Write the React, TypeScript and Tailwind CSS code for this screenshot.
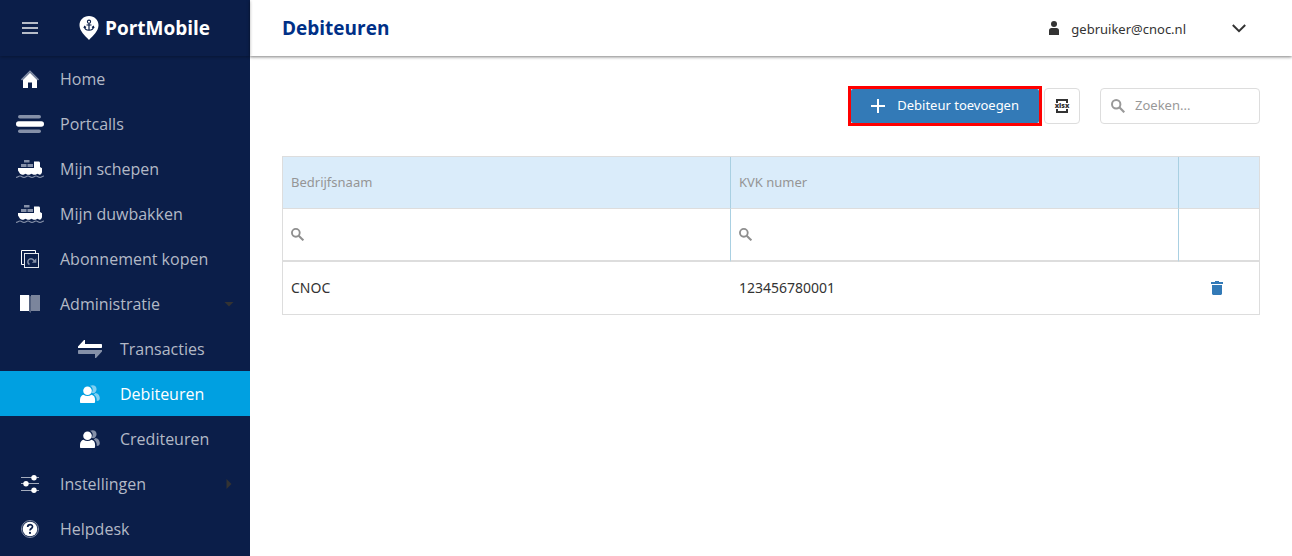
import { useState } from "react";
import type { ReactNode } from "react";
import clsx from "clsx";

interface MenuItem {
  label: string;
  icon: ReactNode;
  child?: boolean;
  arrow?: "down" | "right";
}

function HomeIcon() {
  return (
    <svg width="18" height="18" viewBox="0 0 18 18" aria-hidden="true">
      <path d="M.5 10 9 1.300 17.500 10" fill="none" stroke="#8590a8" strokeWidth="1.600" />
      <path d="M9 2.800 16 9.800V18h-5v-5.500H7V18H2V9.800z" fill="#fff" />
    </svg>
  );
}

function PortcallsIcon() {
  return (
    <svg width="28" height="18" viewBox="0 0 28 18" aria-hidden="true">
      <rect x="2" width="23" height="3.600" rx="1.800" fill="#8590a8" />
      <rect y="6.300" width="28" height="5.400" rx="2.700" fill="#fff" />
      <rect x="2" y="14.400" width="23" height="3.600" rx="1.800" fill="#8590a8" />
    </svg>
  );
}

function ShipIcon() {
  return (
    <svg width="28" height="18" viewBox="0 0 28 18" aria-hidden="true">
      <path d="M8 0h5.500v2.500H8zM5 4h5.500v3H5zM11.500 4H17v3h-5.500z" fill="#8590a8" />
      <path
        d="M2 8h16V1.500h4.500c1 0 1.500.7 1.500 1.500v4l2 1.300v4L25 14.300l-1.500.4-2-1-2 1h-2l-2-1-2 1h-2l-2-1-2 1H6l-2-1L2 10.500z"
        fill="#fff"
      />
      <path
        d="M0 17.300c2 0 2-1.300 4-1.300s2 1.300 4 1.300 2-1.300 4-1.300 2 1.300 4 1.300 2-1.300 4-1.300 2 1.300 4 1.300 2-1.300 4-1.300"
        fill="none"
        stroke="#8590a8"
        strokeWidth="1.200"
      />
    </svg>
  );
}

function SubscriptionIcon() {
  return (
    <svg width="18" height="18" viewBox="0 0 18 18" fill="none" aria-hidden="true">
      <path d="M3 14.500H.5V.5h14V3" stroke="#fff" />
      <rect x="3.500" y="3.500" width="14" height="14" stroke="#e3e6eb" />
      <path d="M8.500 14.500c-2-1-2.200-3.700-.5-5s4.500-.7 5.300 1.700" stroke="#8590a8" strokeWidth="1.500" />
      <path d="M15.300 8.300v4.400h-4.400z" fill="#8590a8" />
    </svg>
  );
}

function BookIcon() {
  return (
    <svg width="20" height="18" viewBox="0 0 20 18" aria-hidden="true">
      <path d="M0 0h9v16H0z" fill="#fff" />
      <path d="M9 0l2 1.500V18l-2-1.500z" fill="#55627f" />
      <path d="M11 0h9v16h-9z" fill="#7b859c" />
    </svg>
  );
}

function TransferIcon() {
  return (
    <svg width="24" height="18" viewBox="0 0 24 18" aria-hidden="true">
      <path d="M6 0h1v4h16c.6 0 1 .4 1 1v2c0 .6-.4 1-1 1H0V6.500z" fill="#fff" />
      <path d="M18 18h-1v-4H1c-.6 0-1-.4-1-1v-2c0-.6.400-1 1-1h23v1.500z" fill="#8590a8" />
    </svg>
  );
}

function UsersIcon({ active }: { active?: boolean }) {
  return (
    <svg width="20" height="18" viewBox="0 0 20 18" aria-hidden="true">
      <g className={active ? "fill-[#7fcff0]" : "fill-[#8590a8]"}>
        <path d="M10 .8C14-1 17 1.500 16.500 4.800c-.3 2-1.500 3-2.500 3.500L11.500 8C13.500 5 13 2.500 10 .8z" />
        <path d="M15.500 8C18 8.500 19.500 10 19.800 13c0 2-1 3-3 3 0-3.500-1-5-3-6.500z" />
      </g>
      <ellipse cx="7.500" cy="5.800" rx="4.300" ry="4.300" fill="#fff" />
      <path d="M3.500 9.800c2.500 1.700 5.500 1.700 8 0C14.500 10.500 15.500 13 15 17c0 .6-.4 1-1 1H1c-.6 0-1-.4-1-1-.3-4 .8-6.500 3.500-7.200z" fill="#fff" />
    </svg>
  );
}

function SlidersIcon() {
  return (
    <svg width="18" height="18" viewBox="0 0 18 18" aria-hidden="true">
      <path d="M0 2.500h18M0 8.500h18M0 15.500h18" stroke="#a5adbe" />
      <circle cx="13" cy="2.700" r="2.700" fill="#fff" />
      <circle cx="5" cy="8.800" r="2.700" fill="#fff" />
      <circle cx="13" cy="15.300" r="2.700" fill="#fff" />
    </svg>
  );
}

function HelpIcon() {
  return (
    <svg width="18" height="18" viewBox="0 0 18 18" fill="none" aria-hidden="true">
      <circle cx="9" cy="9" r="8.500" stroke="#8590a8" />
      <circle cx="9" cy="9" r="7.300" fill="#fff" />
      <path d="M6.700 7c0-3 4.800-3 4.800-.3C11.500 8.500 9 8.500 9 10.600" stroke="#0b1e49" strokeWidth="1.700" />
      <circle cx="9" cy="12.900" r="1.100" fill="#0b1e49" />
    </svg>
  );
}

function PinIcon() {
  return (
    <svg width="20" height="24" viewBox="0 0 20 24" fill="none" aria-hidden="true">
      <path d="M10 0c5.500 0 9.500 4 9.500 9.200C19.500 15 14 19.500 10 24 6 19.500.5 15 .5 9.200.5 4 4.500 0 10 0z" fill="#fff" />
      <circle cx="10" cy="5.700" r="1.600" stroke="#0b1e49" strokeWidth="1.100" />
      <path d="M10 7.300V14M7.500 9h5M5.500 10.500c.3 5 8.700 5 9 0M4.900 12l.7-1.600 1.400 1M15.100 12l-.7-1.600-1.400 1" stroke="#0b1e49" strokeWidth="1.200" />
    </svg>
  );
}

function SearchIcon({ size }: { size: number }) {
  return (
    <svg width={size} height={size} viewBox="0 0 14 14" fill="none" aria-hidden="true">
      <circle cx="5.200" cy="5.200" r="4.200" stroke="currentColor" strokeWidth="2" />
      <path d="m8.300 8.300 5 5" stroke="currentColor" strokeWidth="2.200" />
    </svg>
  );
}

function XlsxIcon() {
  return (
    <svg width="16" height="14" viewBox="0 0 16 14" aria-hidden="true">
      <path d="M3 4V1h10v3M3 10v3h10v-3" fill="none" stroke="#333" strokeWidth="2" />
      <text x="8" y="9.300" textAnchor="middle" fill="#333" className="font-['Open_Sans',sans-serif] text-[7px] font-extrabold">
        xlsx
      </text>
    </svg>
  );
}

const menu: MenuItem[] = [
  { label: "Home", icon: <HomeIcon /> },
  { label: "Portcalls", icon: <PortcallsIcon /> },
  { label: "Mijn schepen", icon: <ShipIcon /> },
  { label: "Mijn duwbakken", icon: <ShipIcon /> },
  { label: "Abonnement kopen", icon: <SubscriptionIcon /> },
  { label: "Administratie", icon: <BookIcon />, arrow: "down" },
  { label: "Transacties", icon: <TransferIcon />, child: true },
  { label: "Debiteuren", icon: <UsersIcon active />, child: true },
  { label: "Crediteuren", icon: <UsersIcon />, child: true },
  { label: "Instellingen", icon: <SlidersIcon />, arrow: "right" },
  { label: "Helpdesk", icon: <HelpIcon /> },
];

const debtors = [{ name: "CNOC", kvk: "123456780001" }];

function Sidebar() {
  return (
    <aside className="flex w-[250px] shrink-0 flex-col bg-[#0b1e49] font-['Open_Sans',sans-serif]">
      <div className="flex h-14 items-center shadow-[0_1px_3px_rgba(0,0,0,0.3)]">
        <button type="button" aria-label="Menu" className="flex w-[60px] justify-center">
          <svg width="16" height="12" viewBox="0 0 16 12" aria-hidden="true">
            <path d="M0 1h16M0 6h16M0 11h16" stroke="#b6bcc8" strokeWidth="2" />
          </svg>
        </button>
        <a href="#" className="ml-[19px] flex items-center gap-1.5 text-[19px] font-bold text-white">
          <PinIcon />
          PortMobile
        </a>
      </div>
      <nav>
        <ul>
          {menu.map((item) => {
            const active = item.label === "Debiteuren";
            return (
              <li key={item.label}>
                <a
                  href="#"
                  aria-current={active ? "page" : undefined}
                  className={clsx(
                    "flex h-[45px] items-center text-base",
                    item.child && "pl-[60px]",
                    active ? "bg-[#00a0e1] text-white" : "text-[#b3b9c6]",
                  )}
                >
                  <span className="flex w-[60px] justify-center">{item.icon}</span>
                  <span className="flex-1">{item.label}</span>
                  {item.arrow && (
                    <span className="mr-4 flex w-[10px] justify-center">
                      <svg width="10" height="10" viewBox="0 0 10 10" fill="#333" aria-hidden="true">
                        <path d={item.arrow === "down" ? "M.5 3h9L5 7.500z" : "M2.500 0v10L7.500 5z"} />
                      </svg>
                    </span>
                  )}
                </a>
              </li>
            );
          })}
        </ul>
      </nav>
    </aside>
  );
}

function FilterCell({ id, label }: { id: string; label: string }) {
  return (
    <td className="h-[53px] border-r border-b-2 border-r-[#a9d0e2] border-b-[#ddd] px-2">
      <div className="flex items-center gap-2 text-[#8f8f8f]">
        <label htmlFor={id} aria-label={label}>
          <SearchIcon size={13} />
        </label>
        <input id={id} type="text" className="min-w-0 flex-1 text-[#333] outline-none" />
      </div>
    </td>
  );
}

export default function App() {
  const [query, setQuery] = useState("");
  const rows = debtors.filter((d) => `${d.name} ${d.kvk}`.toLowerCase().includes(query.toLowerCase()));

  return (
    <div className="flex min-h-screen bg-white font-['Noto_Sans',sans-serif] text-[13px] text-[#333]">
      <Sidebar />
      <div className="min-w-0 flex-1">
        <header className="flex h-14 items-center justify-between pr-[46px] pl-8 shadow-[0_1px_3px_rgba(0,0,0,0.5)]">
          <h1 className="font-['Open_Sans',sans-serif] text-[19px] font-bold text-[#003087]">Debiteuren</h1>
          <button type="button" className="flex items-center">
            <svg width="10" height="14" viewBox="0 0 10 14" fill="#333" aria-hidden="true">
              <circle cx="5" cy="3" r="3" />
              <path d="M0 14v-4.500C0 8 1 7 2.500 7h5C9 7 10 8 10 9.500V14z" />
            </svg>
            <span className="ml-3 py-1 pt-2">gebruiker@cnoc.nl</span>
            <svg className="ml-[46px]" width="14" height="9" viewBox="0 0 14 9" fill="none" aria-hidden="true">
              <path d="m.8 1 6.200 6.200L13.200 1" stroke="#333" strokeWidth="2" />
            </svg>
          </button>
        </header>

        <main className="px-8 pt-[30px]">
          <div className="flex items-center justify-end">
            <div className="border-3 border-[#f00]">
              <button type="button" className="flex h-[34px] items-center gap-3 rounded-xs bg-[#337ab7] px-5 text-white">
                <svg width="14" height="14" viewBox="0 0 14 14" aria-hidden="true">
                  <path d="M7 0v14M0 7h14" stroke="#fff" strokeWidth="2" />
                </svg>
                Debiteur toevoegen
              </button>
            </div>
            <button
              type="button"
              aria-label="Exporteren naar Excel"
              className="ml-0.5 flex size-9 items-center justify-center rounded border border-[#ddd]"
            >
              <XlsxIcon />
            </button>
            <div className="ml-5 flex h-9 w-40 items-center gap-2.5 rounded border border-[#ddd] px-2.5 text-[#999]">
              <label htmlFor="search" aria-label="Zoeken">
                <SearchIcon size={14} />
              </label>
              <input
                id="search"
                type="text"
                placeholder="Zoeken..."
                value={query}
                onChange={(e) => setQuery(e.target.value)}
                className="min-w-0 flex-1 text-[#333] outline-none placeholder:text-[#999]"
              />
            </div>
          </div>

          <table className="mt-[30px] w-full table-fixed border-separate border-spacing-0 border border-[#ddd]">
            <colgroup>
              <col />
              <col />
              <col className="w-20" />
            </colgroup>
            <thead>
              <tr className="bg-[#daecfa] text-left text-[#959595]">
                <th className="h-[52px] border-r border-b border-r-[#a9d0e2] border-b-[#ddd] px-2 font-normal">Bedrijfsnaam</th>
                <th className="border-r border-b border-r-[#a9d0e2] border-b-[#ddd] px-2 font-normal">KVK numer</th>
                <td className="border-b border-[#ddd]" />
              </tr>
              <tr>
                <FilterCell id="filter-name" label="Filter bedrijfsnaam" />
                <FilterCell id="filter-kvk" label="Filter KVK numer" />
                <td className="border-b-2 border-[#ddd]" />
              </tr>
            </thead>
            <tbody className="text-sm">
              {rows.map((row) => (
                <tr key={row.kvk}>
                  <td className="h-[52px] px-2">{row.name}</td>
                  <td className="px-2">{row.kvk}</td>
                  <td className="pr-3 pl-2">
                    <button type="button" aria-label="Verwijderen" className="mx-auto block">
                      <svg width="12" height="14" viewBox="0 0 12 14" fill="#337ab7" aria-hidden="true">
                        <path d="M4 0h4v1h4v2H0V1h4zM1 4h10v9l-1 1H2l-1-1z" />
                      </svg>
                    </button>
                  </td>
                </tr>
              ))}
            </tbody>
          </table>
        </main>
      </div>
    </div>
  );
}
